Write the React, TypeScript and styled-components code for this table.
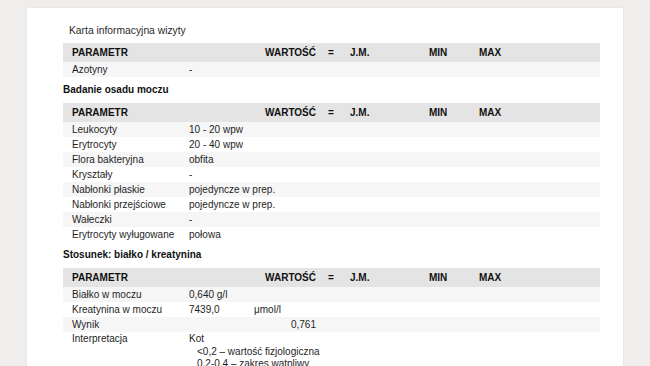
import React from "react";
import styled, { createGlobalStyle } from "styled-components";

const Global = createGlobalStyle`
  html, body { margin: 0; padding: 0; background: #efeeec; }
  body { font-family: "Liberation Sans", Arial, sans-serif; color: #1c1c1c; }
`;

const Page = styled.div`
  padding: 8px 27px 0 27px;
`;

const Paper = styled.div`
  background: #ffffff;
  box-shadow: 0 0 2px rgba(0, 0, 0, 0.07);
  padding: 16px 23px 20px 36px;
`;

const DocTitle = styled.div`
  font-size: 10.3px;
  line-height: 14px;
  color: #2a2a2a;
  padding-left: 6px;
  margin-bottom: 5px;
`;

const SectionTitle = styled.div`
  font-size: 10px;
  font-weight: bold;
  line-height: 14px;
  padding: 6px 0 6px 0;
  color: #111;
`;

const Table = styled.div`
  display: flex;
  flex-direction: column;
`;

const Row = styled.div<{ $head?: boolean; $striped?: boolean; $tall?: boolean }>`
  display: grid;
  grid-template-columns: 126px 131px 30px 79px 50px 1fr;
  font-size: 10px;
  line-height: ${(p) => (p.$head ? "19px" : p.$tall ? "12.5px" : "15px")};
  min-height: ${(p) => (p.$head ? "19px" : "15px")};
  padding-top: ${(p) => (p.$tall ? "1px" : "0")};
  font-weight: ${(p) => (p.$head ? "bold" : "normal")};
  background: ${(p) => (p.$head ? "#e4e4e4" : p.$striped ? "#f6f6f6" : "#ffffff")};
  color: ${(p) => (p.$head ? "#111" : "#1e1e1e")};
`;

const Cell = styled.div<{ $pad?: number; $right?: boolean }>`
  padding-left: ${(p) => p.$pad ?? 0}px;
  padding-right: ${(p) => (p.$right ? 4 : 0)}px;
  text-align: ${(p) => (p.$right ? "right" : "left")};
  white-space: nowrap;
`;

const Num = styled.span`
  display: inline-block;
  width: 65px;
`;

const Indented = styled.div`
  padding-left: 8px;
`;

const Header = () => (
  <Row $head>
    <Cell $pad={9}>PARAMETR</Cell>
    <Cell $right>WARTOŚĆ</Cell>
    <Cell $pad={8}>=</Cell>
    <Cell>J.M.</Cell>
    <Cell>MIN</Cell>
    <Cell>MAX</Cell>
  </Row>
);

type Item = { name: string; value: React.ReactNode; right?: boolean };

const DataRow = ({ item, striped }: { item: Item; striped: boolean }) => (
  <Row $striped={striped}>
    <Cell $pad={9}>{item.name}</Cell>
    <Cell $right={item.right}>{item.value}</Cell>
    <Cell />
    <Cell />
    <Cell />
    <Cell />
  </Row>
);

const osad: Item[] = [
  { name: "Leukocyty", value: "10 - 20 wpw" },
  { name: "Erytrocyty", value: "20 - 40 wpw" },
  { name: "Flora bakteryjna", value: "obfita" },
  { name: "Kryształy", value: "-" },
  { name: "Nabłonki płaskie", value: "pojedyncze w prep." },
  { name: "Nabłonki przejściowe", value: "pojedyncze w prep." },
  { name: "Wałeczki", value: "-" },
  { name: "Erytrocyty wyługowane", value: "połowa" },
];

const stosunek: Item[] = [
  { name: "Białko w moczu", value: "0,640  g/l" },
  {
    name: "Kreatynina w moczu",
    value: (
      <>
        <Num>7439,0</Num>μmol/l
      </>
    ),
  },
  { name: "Wynik", value: "0,761", right: true },
];

export default function App() {
  return (
    <>
      <Global />
      <Page>
        <Paper>
          <DocTitle>Karta informacyjna wizyty</DocTitle>
          <Table>
            <Header />
            <DataRow item={{ name: "Azotyny", value: "-" }} striped />
          </Table>

          <SectionTitle>Badanie osadu moczu</SectionTitle>
          <Table>
            <Header />
            {osad.map((it, i) => (
              <DataRow key={it.name} item={it} striped={i % 2 === 0} />
            ))}
          </Table>

          <SectionTitle>Stosunek: białko / kreatynina</SectionTitle>
          <Table>
            <Header />
            {stosunek.map((it, i) => (
              <DataRow key={it.name} item={it} striped={i % 2 === 0} />
            ))}
            <Row $tall>
              <Cell $pad={9}>Interpretacja</Cell>
              <Cell>
                <div>Kot</div>
                <Indented>&lt;0,2 – wartość fizjologiczna</Indented>
                <Indented>0,2-0,4 – zakres wątpliwy</Indented>
                <Indented>&gt;0,4 – białkomocz</Indented>
              </Cell>
              <Cell />
              <Cell />
              <Cell />
              <Cell />
            </Row>
          </Table>
        </Paper>
      </Page>
    </>
  );
}
